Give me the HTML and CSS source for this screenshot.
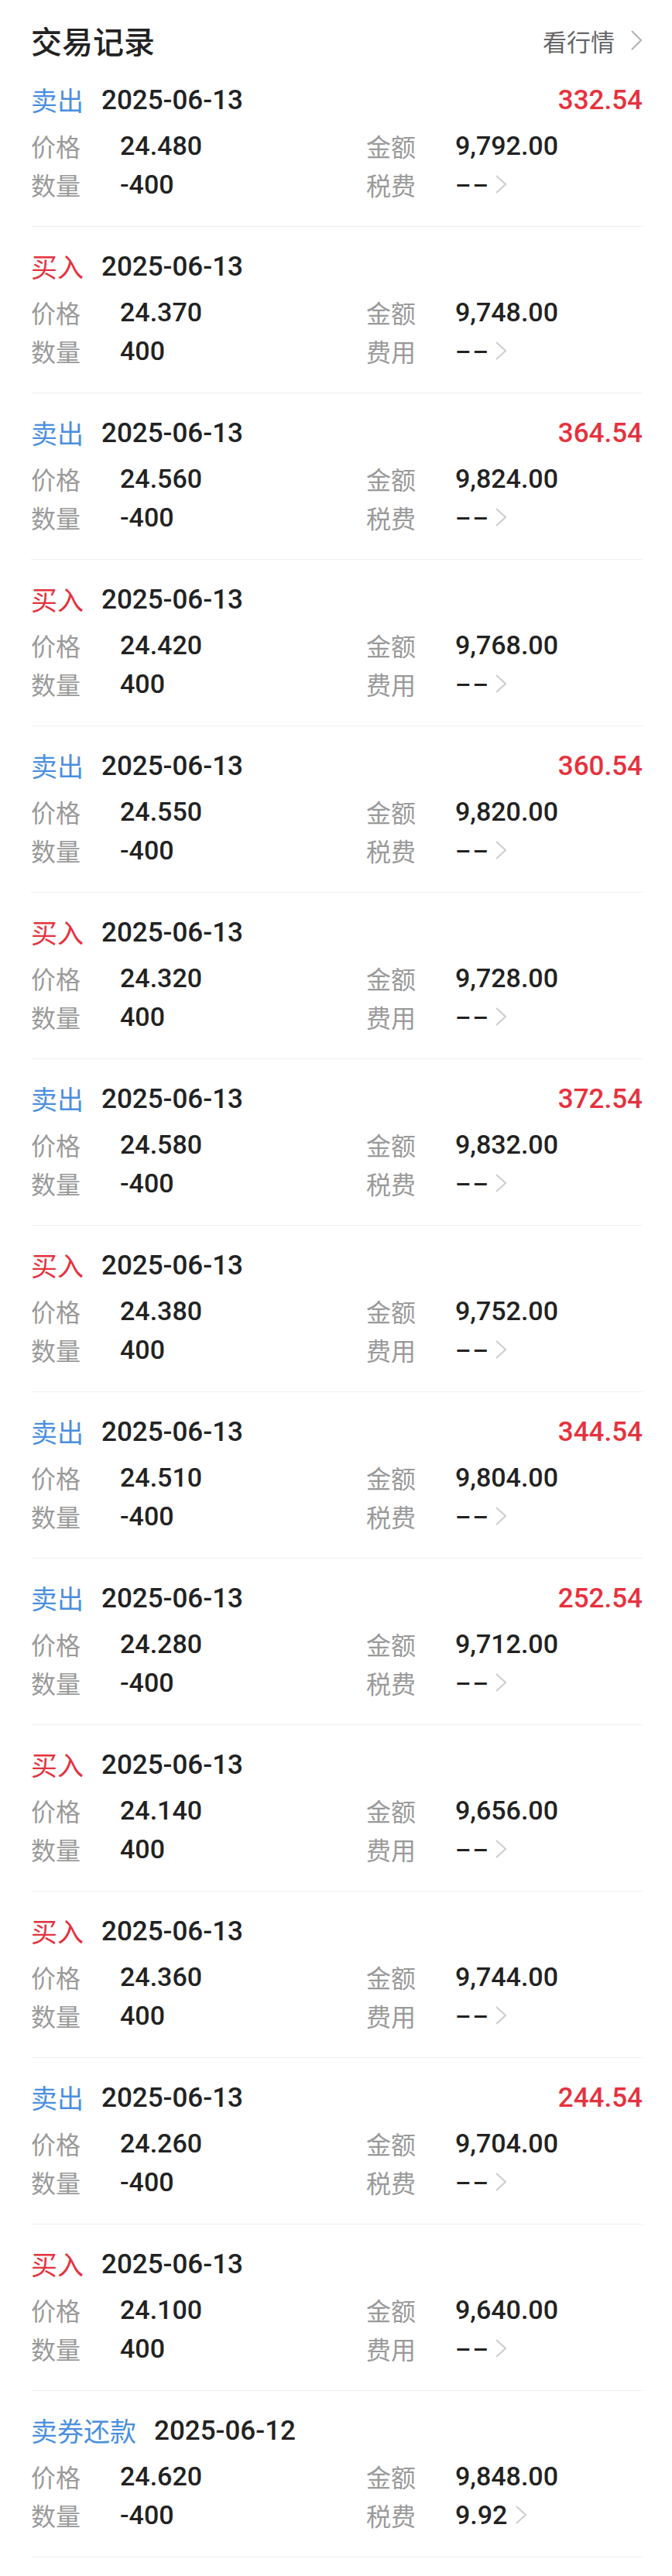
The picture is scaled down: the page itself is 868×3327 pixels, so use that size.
FILE: index.html
```html
<!DOCTYPE html>
<html lang="zh-CN">
<head>
    <meta charset="UTF-8">
    <meta name="viewport" content="width=device-width, initial-scale=1.0">
    <title>交易记录</title>
    <link rel="stylesheet" href="styles.css">
</head>
<body>

    <div class="top-bar">
        <h1 class="title">交易记录</h1>
        <a class="quote-link">看行情<svg class="chev chev-head" viewBox="0 0 16 28"><polyline points="2,2 14,14 2,26"/></svg></a>
    </div>

    <ul class="trades">
        <li class="trade">
            <div class="trade-head"><span class="side sell">卖出</span><span class="date">2025-06-13</span><span class="profit">332.54</span></div>
            <div class="trade-grid">
                <div class="cell"><span class="label">价格</span><span class="value">24.480</span></div>
                <div class="cell"><span class="label">金额</span><span class="value">9,792.00</span></div>
                <div class="cell"><span class="label">数量</span><span class="value">-400</span></div>
                <div class="cell"><span class="label">税费</span><span class="value dash">--</span><svg class="chev" viewBox="0 0 16 26"><polyline points="2,2 14,13 2,24"/></svg></div>
            </div>
        </li>
        <li class="trade">
            <div class="trade-head"><span class="side buy">买入</span><span class="date">2025-06-13</span></div>
            <div class="trade-grid">
                <div class="cell"><span class="label">价格</span><span class="value">24.370</span></div>
                <div class="cell"><span class="label">金额</span><span class="value">9,748.00</span></div>
                <div class="cell"><span class="label">数量</span><span class="value">400</span></div>
                <div class="cell"><span class="label">费用</span><span class="value dash">--</span><svg class="chev" viewBox="0 0 16 26"><polyline points="2,2 14,13 2,24"/></svg></div>
            </div>
        </li>
        <li class="trade">
            <div class="trade-head"><span class="side sell">卖出</span><span class="date">2025-06-13</span><span class="profit">364.54</span></div>
            <div class="trade-grid">
                <div class="cell"><span class="label">价格</span><span class="value">24.560</span></div>
                <div class="cell"><span class="label">金额</span><span class="value">9,824.00</span></div>
                <div class="cell"><span class="label">数量</span><span class="value">-400</span></div>
                <div class="cell"><span class="label">税费</span><span class="value dash">--</span><svg class="chev" viewBox="0 0 16 26"><polyline points="2,2 14,13 2,24"/></svg></div>
            </div>
        </li>
        <li class="trade">
            <div class="trade-head"><span class="side buy">买入</span><span class="date">2025-06-13</span></div>
            <div class="trade-grid">
                <div class="cell"><span class="label">价格</span><span class="value">24.420</span></div>
                <div class="cell"><span class="label">金额</span><span class="value">9,768.00</span></div>
                <div class="cell"><span class="label">数量</span><span class="value">400</span></div>
                <div class="cell"><span class="label">费用</span><span class="value dash">--</span><svg class="chev" viewBox="0 0 16 26"><polyline points="2,2 14,13 2,24"/></svg></div>
            </div>
        </li>
        <li class="trade">
            <div class="trade-head"><span class="side sell">卖出</span><span class="date">2025-06-13</span><span class="profit">360.54</span></div>
            <div class="trade-grid">
                <div class="cell"><span class="label">价格</span><span class="value">24.550</span></div>
                <div class="cell"><span class="label">金额</span><span class="value">9,820.00</span></div>
                <div class="cell"><span class="label">数量</span><span class="value">-400</span></div>
                <div class="cell"><span class="label">税费</span><span class="value dash">--</span><svg class="chev" viewBox="0 0 16 26"><polyline points="2,2 14,13 2,24"/></svg></div>
            </div>
        </li>
        <li class="trade">
            <div class="trade-head"><span class="side buy">买入</span><span class="date">2025-06-13</span></div>
            <div class="trade-grid">
                <div class="cell"><span class="label">价格</span><span class="value">24.320</span></div>
                <div class="cell"><span class="label">金额</span><span class="value">9,728.00</span></div>
                <div class="cell"><span class="label">数量</span><span class="value">400</span></div>
                <div class="cell"><span class="label">费用</span><span class="value dash">--</span><svg class="chev" viewBox="0 0 16 26"><polyline points="2,2 14,13 2,24"/></svg></div>
            </div>
        </li>
        <li class="trade">
            <div class="trade-head"><span class="side sell">卖出</span><span class="date">2025-06-13</span><span class="profit">372.54</span></div>
            <div class="trade-grid">
                <div class="cell"><span class="label">价格</span><span class="value">24.580</span></div>
                <div class="cell"><span class="label">金额</span><span class="value">9,832.00</span></div>
                <div class="cell"><span class="label">数量</span><span class="value">-400</span></div>
                <div class="cell"><span class="label">税费</span><span class="value dash">--</span><svg class="chev" viewBox="0 0 16 26"><polyline points="2,2 14,13 2,24"/></svg></div>
            </div>
        </li>
        <li class="trade">
            <div class="trade-head"><span class="side buy">买入</span><span class="date">2025-06-13</span></div>
            <div class="trade-grid">
                <div class="cell"><span class="label">价格</span><span class="value">24.380</span></div>
                <div class="cell"><span class="label">金额</span><span class="value">9,752.00</span></div>
                <div class="cell"><span class="label">数量</span><span class="value">400</span></div>
                <div class="cell"><span class="label">费用</span><span class="value dash">--</span><svg class="chev" viewBox="0 0 16 26"><polyline points="2,2 14,13 2,24"/></svg></div>
            </div>
        </li>
        <li class="trade">
            <div class="trade-head"><span class="side sell">卖出</span><span class="date">2025-06-13</span><span class="profit">344.54</span></div>
            <div class="trade-grid">
                <div class="cell"><span class="label">价格</span><span class="value">24.510</span></div>
                <div class="cell"><span class="label">金额</span><span class="value">9,804.00</span></div>
                <div class="cell"><span class="label">数量</span><span class="value">-400</span></div>
                <div class="cell"><span class="label">税费</span><span class="value dash">--</span><svg class="chev" viewBox="0 0 16 26"><polyline points="2,2 14,13 2,24"/></svg></div>
            </div>
        </li>
        <li class="trade">
            <div class="trade-head"><span class="side sell">卖出</span><span class="date">2025-06-13</span><span class="profit">252.54</span></div>
            <div class="trade-grid">
                <div class="cell"><span class="label">价格</span><span class="value">24.280</span></div>
                <div class="cell"><span class="label">金额</span><span class="value">9,712.00</span></div>
                <div class="cell"><span class="label">数量</span><span class="value">-400</span></div>
                <div class="cell"><span class="label">税费</span><span class="value dash">--</span><svg class="chev" viewBox="0 0 16 26"><polyline points="2,2 14,13 2,24"/></svg></div>
            </div>
        </li>
        <li class="trade">
            <div class="trade-head"><span class="side buy">买入</span><span class="date">2025-06-13</span></div>
            <div class="trade-grid">
                <div class="cell"><span class="label">价格</span><span class="value">24.140</span></div>
                <div class="cell"><span class="label">金额</span><span class="value">9,656.00</span></div>
                <div class="cell"><span class="label">数量</span><span class="value">400</span></div>
                <div class="cell"><span class="label">费用</span><span class="value dash">--</span><svg class="chev" viewBox="0 0 16 26"><polyline points="2,2 14,13 2,24"/></svg></div>
            </div>
        </li>
        <li class="trade">
            <div class="trade-head"><span class="side buy">买入</span><span class="date">2025-06-13</span></div>
            <div class="trade-grid">
                <div class="cell"><span class="label">价格</span><span class="value">24.360</span></div>
                <div class="cell"><span class="label">金额</span><span class="value">9,744.00</span></div>
                <div class="cell"><span class="label">数量</span><span class="value">400</span></div>
                <div class="cell"><span class="label">费用</span><span class="value dash">--</span><svg class="chev" viewBox="0 0 16 26"><polyline points="2,2 14,13 2,24"/></svg></div>
            </div>
        </li>
        <li class="trade">
            <div class="trade-head"><span class="side sell">卖出</span><span class="date">2025-06-13</span><span class="profit">244.54</span></div>
            <div class="trade-grid">
                <div class="cell"><span class="label">价格</span><span class="value">24.260</span></div>
                <div class="cell"><span class="label">金额</span><span class="value">9,704.00</span></div>
                <div class="cell"><span class="label">数量</span><span class="value">-400</span></div>
                <div class="cell"><span class="label">税费</span><span class="value dash">--</span><svg class="chev" viewBox="0 0 16 26"><polyline points="2,2 14,13 2,24"/></svg></div>
            </div>
        </li>
        <li class="trade">
            <div class="trade-head"><span class="side buy">买入</span><span class="date">2025-06-13</span></div>
            <div class="trade-grid">
                <div class="cell"><span class="label">价格</span><span class="value">24.100</span></div>
                <div class="cell"><span class="label">金额</span><span class="value">9,640.00</span></div>
                <div class="cell"><span class="label">数量</span><span class="value">400</span></div>
                <div class="cell"><span class="label">费用</span><span class="value dash">--</span><svg class="chev" viewBox="0 0 16 26"><polyline points="2,2 14,13 2,24"/></svg></div>
            </div>
        </li>
        <li class="trade">
            <div class="trade-head"><span class="side sell">卖券还款</span><span class="date">2025-06-12</span></div>
            <div class="trade-grid">
                <div class="cell"><span class="label">价格</span><span class="value">24.620</span></div>
                <div class="cell"><span class="label">金额</span><span class="value">9,848.00</span></div>
                <div class="cell"><span class="label">数量</span><span class="value">-400</span></div>
                <div class="cell"><span class="label">税费</span><span class="value">9.92</span><svg class="chev" viewBox="0 0 16 26"><polyline points="2,2 14,13 2,24"/></svg></div>
            </div>
        </li>
    </ul>

</body>
</html>
```

FILE: styles.css
```css
body {
    margin: 0;
    background-color: #ffffff;
    color: #222222;
    font-family: Roboto, "Noto Sans CJK SC", sans-serif;
}
.top-bar {
    display: flex;
    align-items: center;
    justify-content: space-between;
    height: 48px;
    padding: 28px 38px 2px 40px;
}
.title {
    margin: 0;
    font-family: "Noto Sans CJK SC", sans-serif;
    font-size: 40px;
    font-weight: 500;
    line-height: 48px;
    color: #222222;
}
.quote-link {
    display: flex;
    align-items: center;
    font-family: "Noto Sans CJK SC", sans-serif;
    font-size: 31px;
    color: #666666;
}
.chev {
    width: 16px;
    height: 26px;
    fill: none;
    stroke: #cfcfcf;
    stroke-width: 2.2;
}
.chev-head {
    height: 28px;
    margin-left: 20px;
    stroke: #b5b5b5;
}
.trades {
    list-style: none;
    margin: 0;
    padding: 0 38px 0 40px;
}
.trade {
    padding: 27px 0 29px;
    border-bottom: 1px solid #f0f0f0;
}
.trade-head {
    display: flex;
    align-items: center;
    height: 48px;
    margin-bottom: 10px;
}
.side {
    font-family: "Noto Sans CJK SC", sans-serif;
    font-size: 34px;
    line-height: 48px;
}
.side.sell {
    color: #4a8fe0;
}
.side.buy {
    color: #e5323e;
}
.date {
    margin-left: 23px;
    font-size: 35px;
    font-weight: 500;
    color: #222222;
}
.profit {
    margin-left: auto;
    font-size: 35px;
    font-weight: 500;
    color: #e5323e;
}
.trade-grid {
    display: grid;
    grid-template-columns: 433px 1fr;
    grid-auto-rows: 50px;
}
.cell {
    display: flex;
    align-items: center;
}
.label {
    width: 115px;
    font-family: "Noto Sans CJK SC", sans-serif;
    font-size: 32px;
    color: #9a9a9a;
}
.value {
    font-size: 34px;
    font-weight: 500;
    color: #222222;
}
.value.dash {
    display: inline-block;
    letter-spacing: 1px;
    transform: scaleX(1.8);
    transform-origin: left center;
    margin-right: 16px;
}
.cell .chev {
    margin-left: 10px;
}
```
